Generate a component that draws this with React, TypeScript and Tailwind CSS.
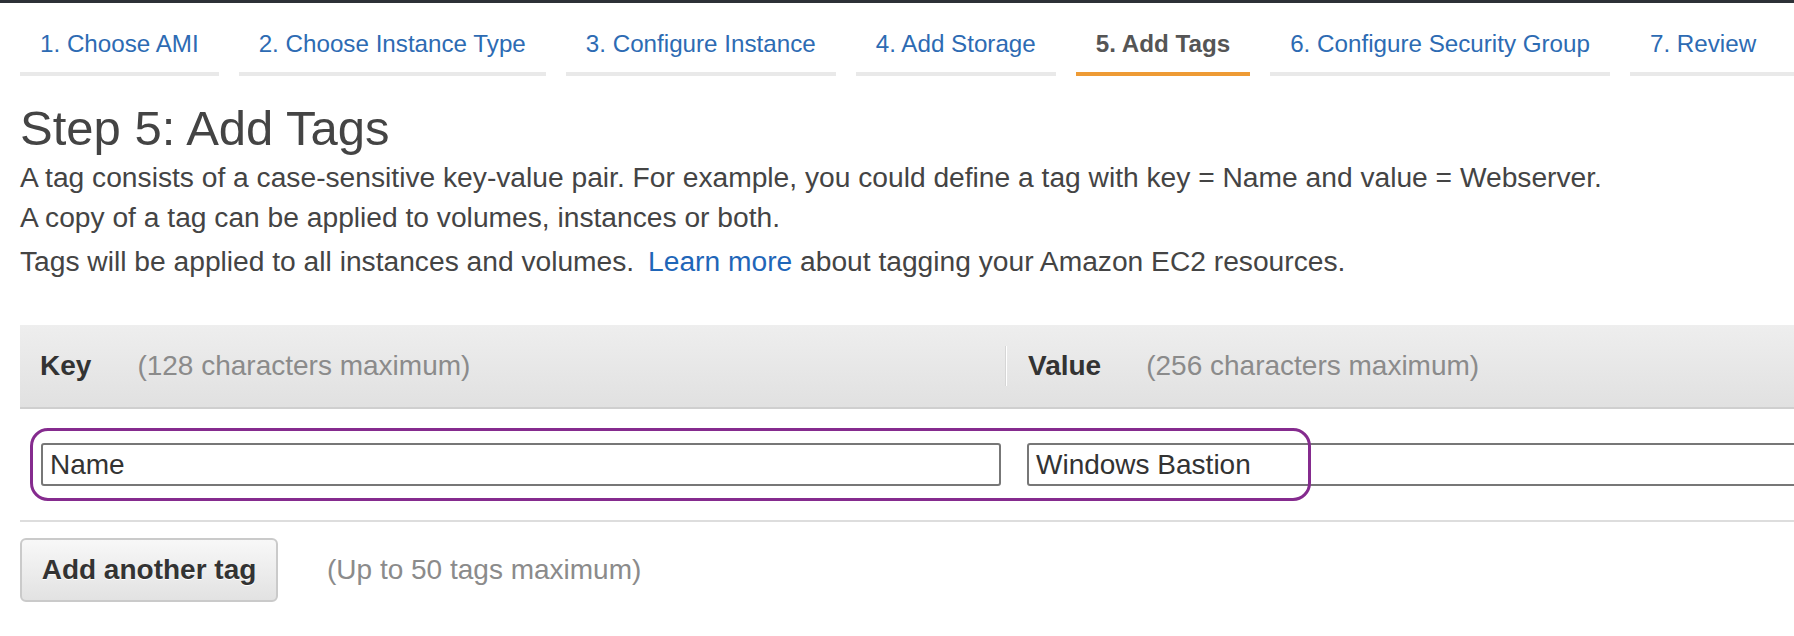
import React from 'react';

const steps = [
  '1. Choose AMI',
  '2. Choose Instance Type',
  '3. Configure Instance',
  '4. Add Storage',
  '5. Add Tags',
  '6. Configure Security Group',
  '7. Review',
];

const App = () => {
  return (
    <div className="w-[1794px] h-[636px] overflow-hidden bg-white font-['Liberation_Sans',Arial,sans-serif] text-[#444]">
      {/* top console bar */}
      <div className="h-[3px] bg-[#2d3137]" />

      {/* Wizard steps */}
      <div className="flex gap-5 pl-5 whitespace-nowrap">
        {steps.map((step, i) => {
          const active = i === 4;
          const last = i === steps.length - 1;
          return (
            <div
              key={step}
              className={
                (active
                  ? 'border-[#ee9b35] font-bold text-[#555] '
                  : 'border-[#e9e9e9] text-[#2d6bb3] ') +
                (last ? 'flex-1 ' : '') +
                'px-5 pt-[27px] pb-[14px] border-b-4 text-[24.2px] leading-[28px]'
              }
            >
              {step}
            </div>
          );
        })}
      </div>

      {/* Heading + description */}
      <div className="pl-5">
        <h1 className="mt-[26px] text-[49px] leading-[52px] text-[#444]">Step 5: Add Tags</h1>
        <div className="mt-[3px] text-[28.2px] leading-[40px] text-[#444]">
          <p>
            A tag consists of a case-sensitive key-value pair. For example, you could define a tag with key = Name and
            value = Webserver.
          </p>
          <p>A copy of a tag can be applied to volumes, instances or both.</p>
          <p className="mt-1">
            Tags will be applied to all instances and volumes.{' '}
            <a className="ml-[6px] text-[#1f66b8]">Learn more</a>{' '}
            about tagging your Amazon EC2 resources.
          </p>
        </div>
      </div>

      {/* Tags table */}
      <div className="ml-5 mt-[44px]">
        <div className="grid grid-cols-[985px_1fr] h-[84px] bg-gradient-to-b from-[#eeeeee] to-[#e1e1e1] border-b-2 border-[#cfcfcf] text-[28px]">
          <div className="flex items-center pl-5">
            <span className="font-bold text-[#333]">Key</span>
            <span className="ml-[46px] text-[#8b8b8b]">(128 characters maximum)</span>
          </div>
          <div className="flex items-center">
            <div className="w-[2px] h-[40px] bg-[#d6d6d6] border-r border-white" />
            <span className="ml-[21px] font-bold text-[#333]">Value</span>
            <span className="ml-[45px] text-[#8b8b8b]">(256 characters maximum)</span>
          </div>
        </div>

        <div className="relative grid grid-cols-[985px_1fr] py-[34px] border-b-2 border-[#dddddd]">
          <div className="pl-[21px] pr-[4px]">
            <div className="h-[43px] flex items-center px-[7px] border-2 border-[#777] rounded-[3px] text-[28px] text-[#333]">
              Name
            </div>
          </div>
          <div className="pl-[22px]">
            <div className="w-[820px] h-[43px] flex items-center px-[7px] border-2 border-[#777] rounded-[3px] text-[28px] text-[#333]">
              Windows Bastion
            </div>
          </div>
          {/* annotation highlight */}
          <div className="absolute left-[10px] top-[19px] w-[1281px] h-[73px] border-[3.5px] border-[#852b8e] rounded-[18px]" />
        </div>

        <div className="flex items-center mt-4">
          <button className="w-[258px] h-[64px] rounded-md border-2 border-[#cacaca] bg-gradient-to-b from-[#f8f8f8] to-[#e2e2e2] text-[28px] font-bold text-[#333] [text-shadow:0_1px_0_#fff]">
            Add another tag
          </button>
          <span className="ml-[49px] text-[28px] text-[#8b8b8b]">(Up to 50 tags maximum)</span>
        </div>
      </div>
    </div>
  );
};

export default App;
